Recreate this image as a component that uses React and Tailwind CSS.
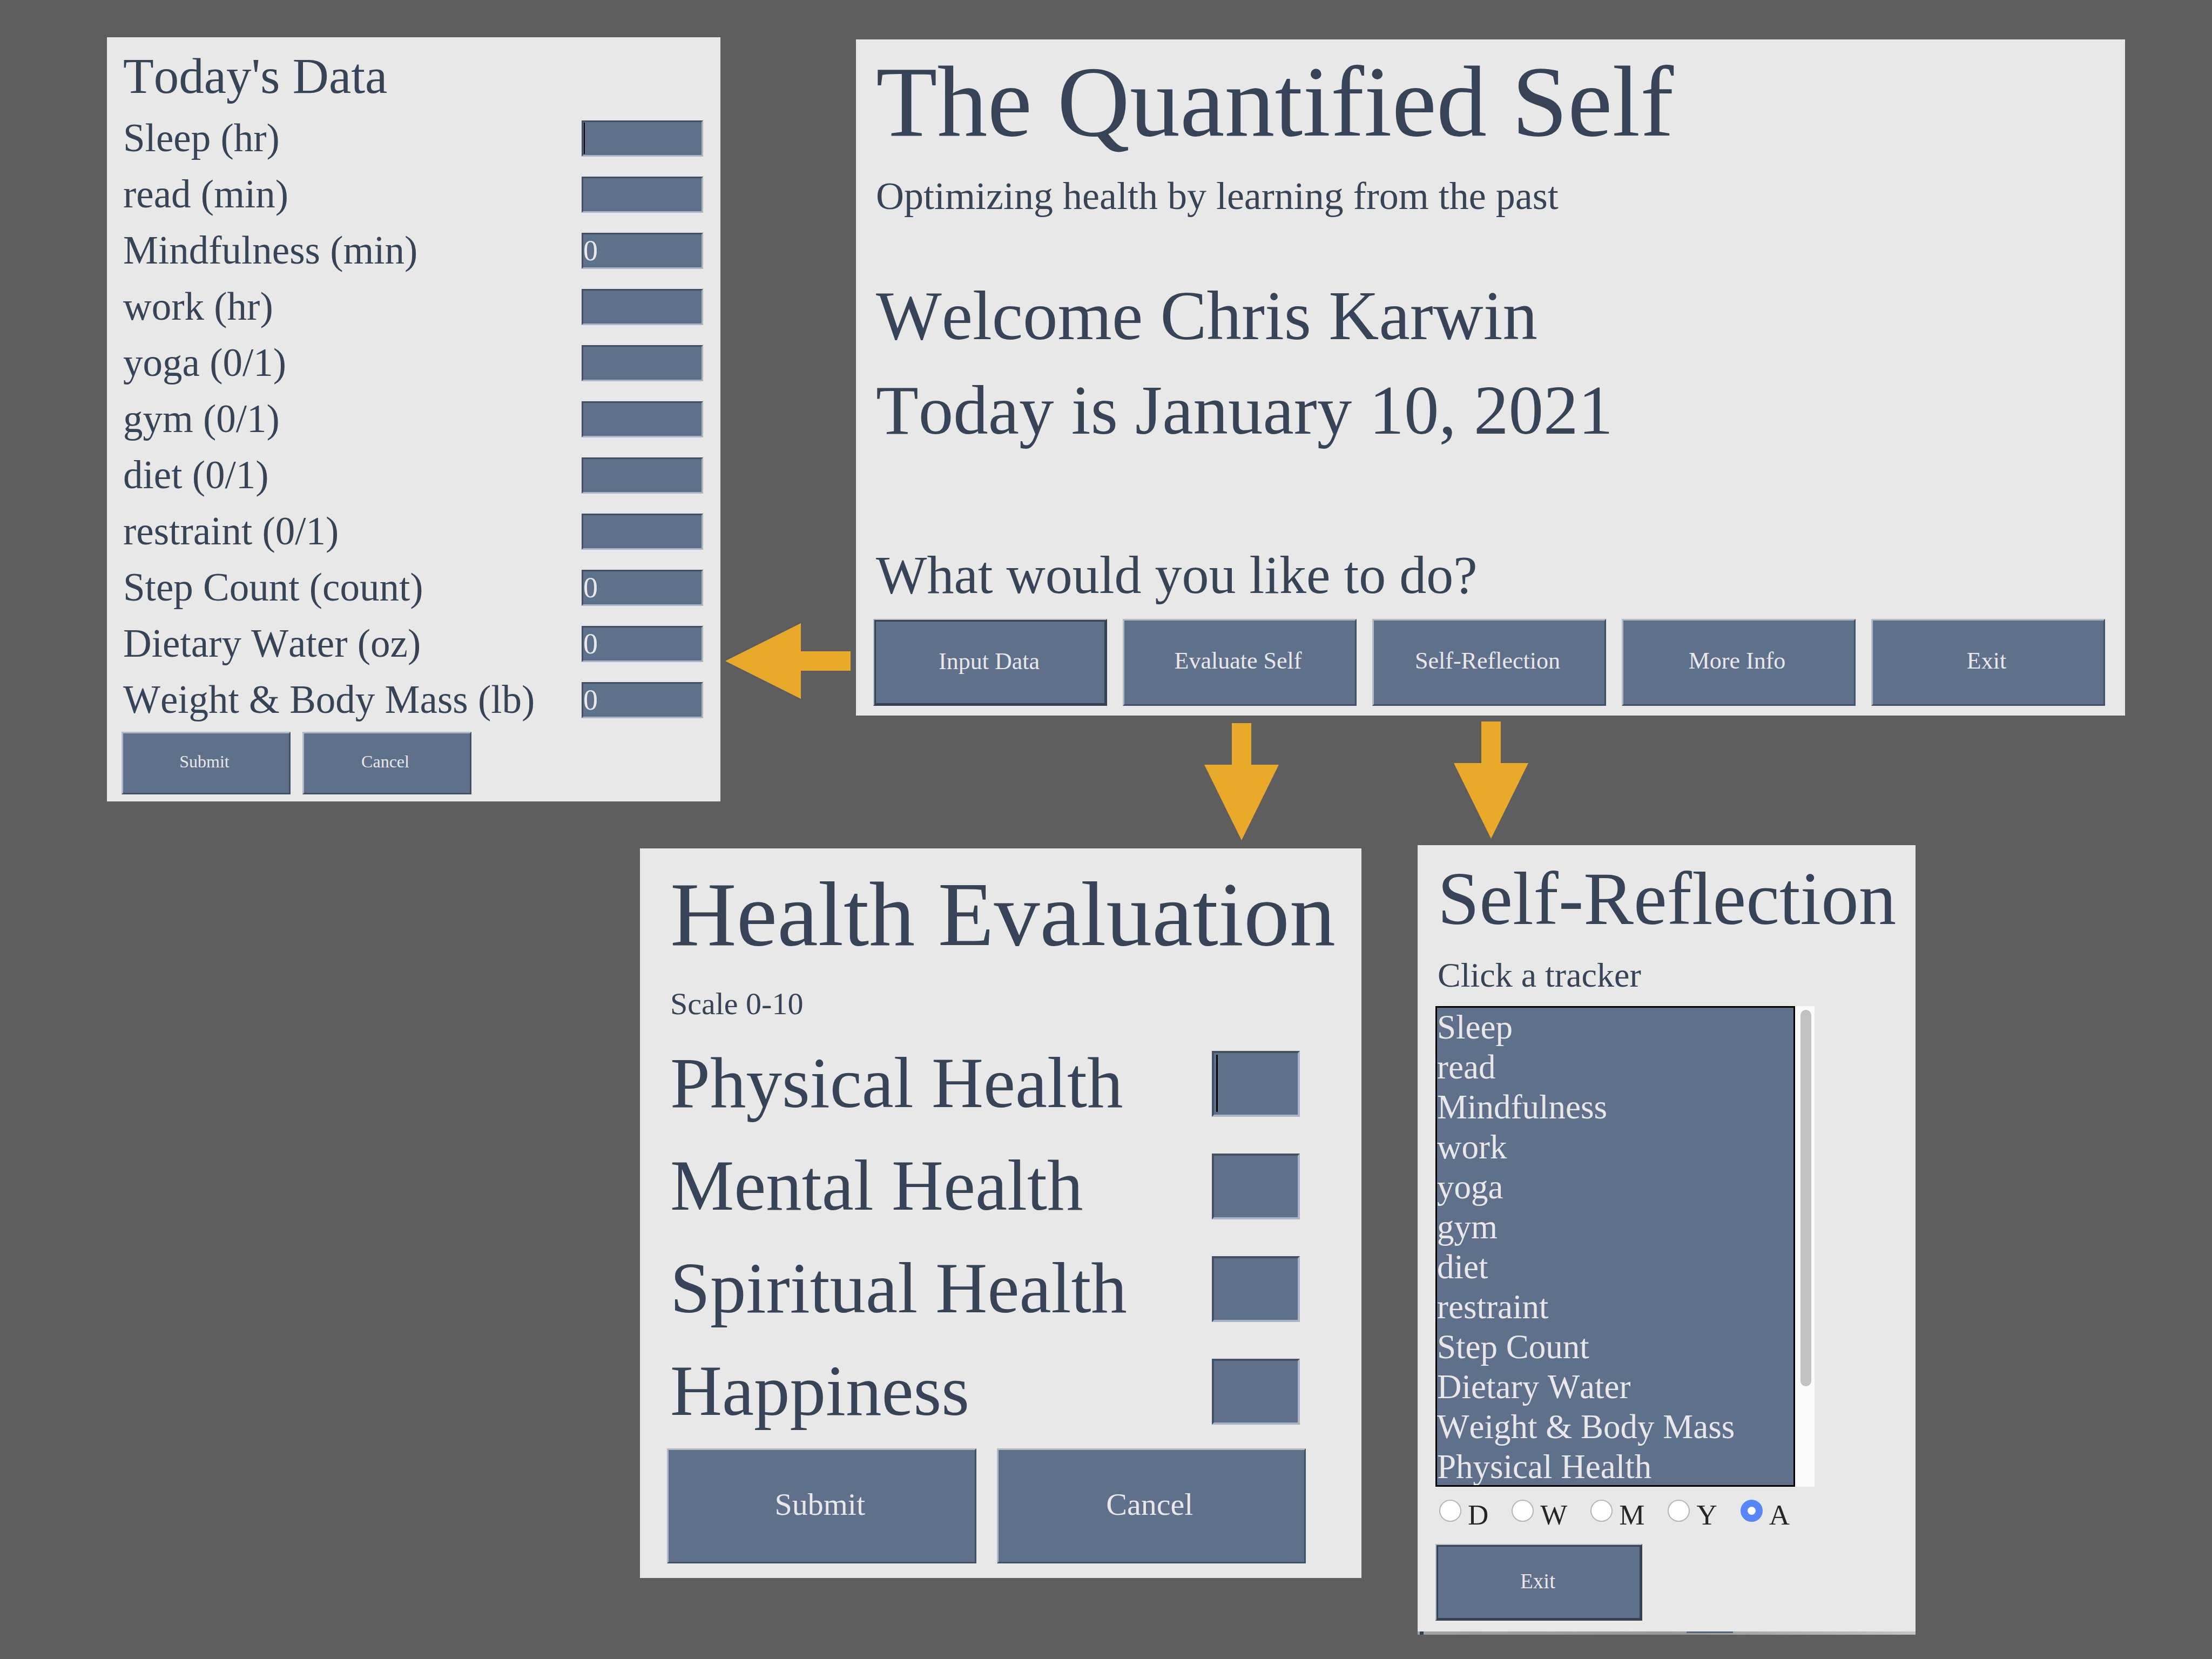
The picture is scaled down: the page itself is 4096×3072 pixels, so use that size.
import React from 'react';

const raised =
  'border-[3px] border-t-[#b1bac9] border-l-[#b1bac9] border-b-[#435165] border-r-[#435165]';
const focused =
  'border-[2px] border-t-[#b1bac9] border-l-[#b1bac9] border-b-[#36434f] border-r-[#364254]';

function Button({ children, active = false, className = '' }) {
  return (
    <button
      type="button"
      className={`bg-[#5f708a] text-[#e8e8e8] ${active ? focused : `${raised} pr-1.5 pb-1.5`} ${className}`}
    >
      {active ? (
        <span className="flex h-full w-full items-center justify-center border-[3px] border-[#364355] pr-1 pb-1">
          {children}
        </span>
      ) : (
        children
      )}
    </button>
  );
}

function LeftArrow() {
  return (
    <svg viewBox="0 0 232 140" className="block w-full" aria-hidden="true">
      <path d="M0 70 L140 0 V52 H232 V88 H140 V140 Z" fill="#e8aa28" />
    </svg>
  );
}

function DownArrow({ className = '' }) {
  return (
    <svg viewBox="0 0 138 217" className={`block w-[138px] ${className}`} aria-hidden="true">
      <path d="M51 0 H87 V77 H138 L69 217 L0 77 H51 Z" fill="#e8aa28" />
    </svg>
  );
}

const dataFields = [
  ['sleep', 'Sleep (hr)', ''],
  ['read', 'read (min)', ''],
  ['mindfulness', 'Mindfulness (min)', '0'],
  ['work', 'work (hr)', ''],
  ['yoga', 'yoga (0/1)', ''],
  ['gym', 'gym (0/1)', ''],
  ['diet', 'diet (0/1)', ''],
  ['restraint', 'restraint (0/1)', ''],
  ['steps', 'Step Count (count)', '0'],
  ['water', 'Dietary Water (oz)', '0'],
  ['weight', 'Weight & Body Mass (lb)', '0'],
];

function TodaysData() {
  return (
    <section className="bg-[#e8e8e8] pt-[22px] pr-[32px] pb-[13px] pl-[27px]">
      <h2 className="pl-[3px] text-[93px] leading-[100px]">Today's Data</h2>
      <div className="mt-[32px] flex flex-col gap-[37px]">
        {dataFields.map(([id, label, value], i) => (
          <div key={id} className="flex h-[67px] items-center justify-between pl-[3px]">
            <label htmlFor={id} className="pb-[2px] text-[73px] leading-[80px] whitespace-nowrap">
              {label}
            </label>
            <div className="relative">
              <input
                id={id}
                type="text"
                defaultValue={value}
                className="block h-[67px] w-[225px] border-[3px] border-t-[#435165] border-r-[#aab4c6] border-b-[#aab4c6] border-l-[#435165] bg-[#5f708a] pb-[2px] text-[54px] leading-[58px] text-[#e8e8e8]"
              />
              {i === 0 && <span className="absolute top-[4px] left-[4px] h-[58px] w-[2px] bg-black" />}
            </div>
          </div>
        ))}
      </div>
      <div className="mt-[25px] flex gap-[22px]">
        <Button className="h-[116px] w-[313px] text-[32px]">Submit</Button>
        <Button className="h-[116px] w-[313px] text-[32px]">Cancel</Button>
      </div>
    </section>
  );
}

function Home() {
  return (
    <section className="mt-[4px] bg-[#e8e8e8] pt-[15px] pr-[37px] pb-[18px] pl-[32px]">
      <h1 className="pl-[5px] text-[186px] leading-[200px]">The Quantified Self</h1>
      <p className="mt-[35px] pl-[5px] text-[72px] leading-[80px]">
        Optimizing health by learning from the past
      </p>
      <p className="mt-[110px] pl-[5px] text-[129px] leading-[144px]">Welcome Chris Karwin</p>
      <p className="mt-[31px] pl-[5px] text-[129px] leading-[144px]">Today is January 10, 2021</p>
      <p className="mt-[177px] pl-[5px] text-[100px] leading-[112px]">What would you like to do?</p>
      <nav className="mt-[25px] grid grid-cols-5 gap-[29px]">
        <Button active className="h-[161px] text-[44px]">Input Data</Button>
        <Button className="h-[161px] text-[44px]">Evaluate Self</Button>
        <Button className="h-[161px] text-[44px]">Self-Reflection</Button>
        <Button className="h-[161px] text-[44px]">More Info</Button>
        <Button className="h-[161px] text-[44px]">Exit</Button>
      </nav>
    </section>
  );
}

const scores = [
  ['physical', 'Physical Health'],
  ['mental', 'Mental Health'],
  ['spiritual', 'Spiritual Health'],
  ['happiness', 'Happiness'],
];

function HealthEvaluation() {
  return (
    <section className="col-start-2 mt-[6px] self-start bg-[#e8e8e8] pt-[32px] pb-[27px] pl-[50px]">
      <h2 className="pl-[6px] text-[170px] leading-[180px] whitespace-nowrap">Health Evaluation</h2>
      <p className="mt-[44px] pl-[6px] text-[58px] leading-[64px]">Scale 0-10</p>
      <div className="mt-[55px] flex flex-col gap-[68px] pr-[114px] pl-[6px]">
        {scores.map(([id, label], i) => (
          <div key={id} className="flex h-[122px] items-center justify-between">
            <label htmlFor={id} className="pb-1 text-[133px] leading-[144px] whitespace-nowrap">
              {label}
            </label>
            <div className="relative">
              <input
                id={id}
                type="text"
                className="block h-[122px] w-[163px] border-[4px] border-t-[#435165] border-r-[#aab4c6] border-b-[#aab4c6] border-l-[#435165] bg-[#5f708a] px-2 text-[100px] text-[#e8e8e8]"
              />
              {i === 0 && <span className="absolute top-[7px] left-[8px] h-[106px] w-[3px] bg-black" />}
            </div>
          </div>
        ))}
      </div>
      <div className="mt-[44px] grid grid-cols-2 gap-[38px] pr-[103px]">
        <Button className="h-[213px] text-[58px]">Submit</Button>
        <Button className="h-[213px] text-[58px]">Cancel</Button>
      </div>
    </section>
  );
}

const trackers = [
  'Sleep',
  'read',
  'Mindfulness',
  'work',
  'yoga',
  'gym',
  'diet',
  'restraint',
  'Step Count',
  'Dietary Water',
  'Weight & Body Mass',
  'Physical Health',
];

const ranges = ['D', 'W', 'M', 'Y', 'A'];

function SelfReflection() {
  return (
    <section className="col-start-4 self-start bg-[#e8e8e8]">
      <div className="pt-[24px] pb-[20px] pl-[33px]">
        <h2 className="pl-[4px] text-[139px] leading-[150px] whitespace-nowrap">Self-Reflection</h2>
        <label htmlFor="tracker" className="mt-[31px] block pl-[4px] text-[64px] leading-[72px]">
          Click a tracker
        </label>
        <div className="mt-[21px] flex h-[890px] pr-[187px]">
          <select
            id="tracker"
            size={12}
            className="h-full flex-1 appearance-none overflow-hidden border-[3px] border-black bg-[#5f708a] p-0 text-[63px] text-[#e8e8e8]"
          >
            {trackers.map((t) => (
              <option key={t} className="m-0 box-border h-[74px] min-h-0 p-0 text-[63px] leading-[68px] text-[#e8e8e8]">
                {t}
              </option>
            ))}
          </select>
          <div className="w-[36px] bg-[#fafafa] pt-[7px] pl-[10px]">
            <div className="h-[697px] w-[20px] rounded-full bg-[#c1c1c1]" />
          </div>
        </div>
        <div className="mt-[22px] flex gap-[43px] pl-[7px] text-[53px] leading-[60px] text-[#262626]">
          {ranges.map((r) => (
            <label key={r} className="flex items-start gap-[12px]">
              <input
                type="radio"
                name="range"
                defaultChecked={r === 'A'}
                className="mt-[2px] h-[41px] w-[41px] appearance-none rounded-full border-2 border-[#b4b4b4] bg-white checked:border-[13px] checked:border-[#5786fa]"
              />
              {r}
            </label>
          ))}
        </div>
        <Button active className="mt-[24px] h-[142px] w-[383px] text-[39px]">Exit</Button>
      </div>
      <div className="flex h-[6px] bg-linear-to-r from-[#a0a2a3] via-[#989a9a] to-[#c4c4c4]">
        <div className="ml-[4px] w-[7px] bg-[#344154]" />
        <div className="ml-[487px] h-[3px] w-[86px] bg-[#56657d]" />
      </div>
    </section>
  );
}

export default function App() {
  return (
    <main className="min-h-screen bg-[#5e5e5e] font-['Liberation_Serif','Times_New_Roman',serif] text-[#374357] [font-kerning:none] [font-variant-ligatures:common-ligatures]">
      <div className="grid grid-cols-[198fr_1136fr_251fr_2350fr_161fr] items-start pt-[69px]">
        <div className="col-start-2">
          <TodaysData />
        </div>
        <div className="mt-[1085px] pr-[10px] pl-[9px]">
          <LeftArrow />
        </div>
        <div>
          <Home />
          <div className="grid grid-cols-5 items-start justify-items-center gap-[29px] pt-[11px] pr-[34px] pl-[35px]">
            <DownArrow className="col-start-2 mt-[3px]" />
            <DownArrow className="col-start-3" />
          </div>
        </div>
      </div>
      <div className="grid grid-cols-[1185fr_1336fr_104fr_922fr_549fr] pt-[9px]">
        <HealthEvaluation />
        <SelfReflection />
      </div>
    </main>
  );
}
